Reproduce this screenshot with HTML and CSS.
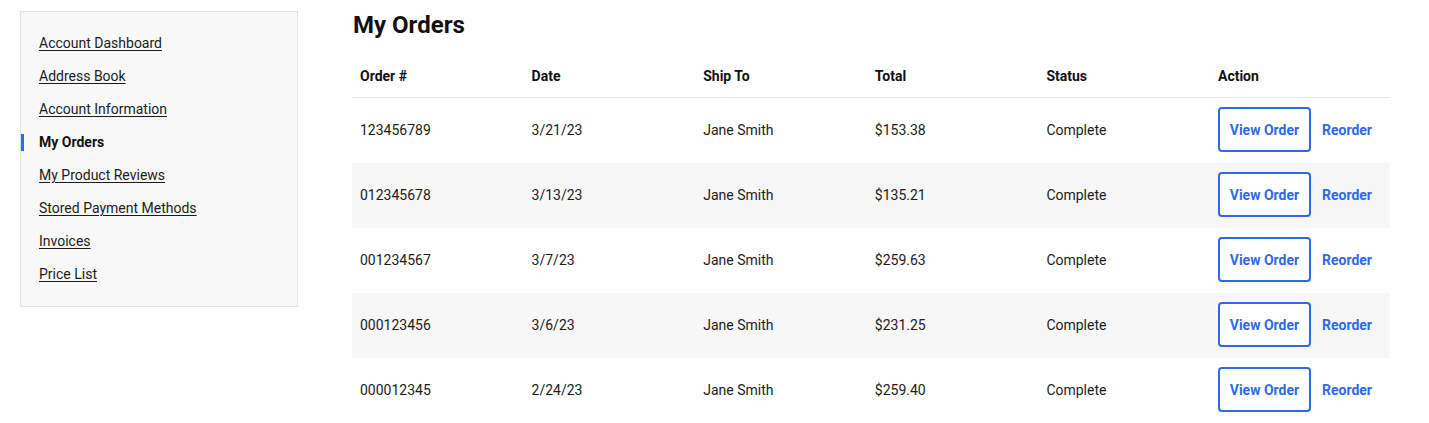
FILE: index.html
```html
<!DOCTYPE html>
<html>
<head>
<meta charset="utf-8">
<link rel="stylesheet" href="styles.css">
</head>
<body>
<div class="page">
  <aside class="sidebar">
    <nav class="nav">
      <a class="nav-link" href="#">Account Dashboard</a>
      <a class="nav-link" href="#">Address Book</a>
      <a class="nav-link" href="#">Account Information</a>
      <span class="nav-link active">My Orders</span>
      <a class="nav-link" href="#">My Product Reviews</a>
      <a class="nav-link" href="#">Stored Payment Methods</a>
      <a class="nav-link" href="#">Invoices</a>
      <a class="nav-link" href="#">Price List</a>
    </nav>
  </aside>
  <main class="main">
    <h1 class="title">My Orders</h1>
    <div class="table">
      <div class="row head">
        <div class="cell">Order #</div>
        <div class="cell">Date</div>
        <div class="cell">Ship To</div>
        <div class="cell">Total</div>
        <div class="cell">Status</div>
        <div class="cell">Action</div>
      </div>
      <div class="row">
        <div class="cell">123456789</div>
        <div class="cell">3/21/23</div>
        <div class="cell">Jane Smith</div>
        <div class="cell">$153.38</div>
        <div class="cell">Complete</div>
        <div class="cell actions"><a class="btn" href="#">View Order</a><a class="reorder" href="#">Reorder</a></div>
      </div>
      <div class="row alt">
        <div class="cell">012345678</div>
        <div class="cell">3/13/23</div>
        <div class="cell">Jane Smith</div>
        <div class="cell">$135.21</div>
        <div class="cell">Complete</div>
        <div class="cell actions"><a class="btn" href="#">View Order</a><a class="reorder" href="#">Reorder</a></div>
      </div>
      <div class="row">
        <div class="cell">001234567</div>
        <div class="cell">3/7/23</div>
        <div class="cell">Jane Smith</div>
        <div class="cell">$259.63</div>
        <div class="cell">Complete</div>
        <div class="cell actions"><a class="btn" href="#">View Order</a><a class="reorder" href="#">Reorder</a></div>
      </div>
      <div class="row alt">
        <div class="cell">000123456</div>
        <div class="cell">3/6/23</div>
        <div class="cell">Jane Smith</div>
        <div class="cell">$231.25</div>
        <div class="cell">Complete</div>
        <div class="cell actions"><a class="btn" href="#">View Order</a><a class="reorder" href="#">Reorder</a></div>
      </div>
      <div class="row">
        <div class="cell">000012345</div>
        <div class="cell">2/24/23</div>
        <div class="cell">Jane Smith</div>
        <div class="cell">$259.40</div>
        <div class="cell">Complete</div>
        <div class="cell actions"><a class="btn" href="#">View Order</a><a class="reorder" href="#">Reorder</a></div>
      </div>
    </div>
  </main>
</div>
</body>
</html>
```

FILE: styles.css
```css
* { box-sizing: border-box; }
html, body { margin: 0; padding: 0; background: #fff; }
body {
  font-family: Roboto, "Liberation Sans", Arial, sans-serif;
  font-size: 14px;
  color: #1c1c1c;
}
.page {
  display: flex;
  align-items: flex-start;
  padding: 11px 0 0 20px;
  gap: 54px;
}
.sidebar {
  width: 278px;
  height: 296px;
  background: #f8f8f8;
  border: 1px solid #e3e3e3;
  flex: none;
}
.nav {
  display: flex;
  flex-direction: column;
  padding-top: 22px;
}
.nav-link {
  position: relative;
  display: block;
  height: 33px;
  line-height: 19px;
  padding-left: 18px;
  color: #1c1c1c;
  text-decoration: underline;
  text-underline-offset: 2px;
  font-size: 14px;
}
.nav-link.active {
  font-weight: 700;
  text-decoration: none;
  color: #111;
}
.nav-link.active::before {
  content: "";
  position: absolute;
  left: 0;
  top: 1px;
  width: 3px;
  height: 17px;
  background: #2f6ae5;
}
.main {
  width: 1038px;
  flex: none;
}
.title {
  margin: 0;
  font-size: 24px;
  font-weight: 700;
  line-height: 28px;
  color: #111;
  padding-left: 1px;
}
.table {
  margin-top: 17px;
}
.row {
  display: grid;
  grid-template-columns: repeat(5, 171.6px) 1fr;
  height: 65px;
  align-items: center;
  padding-bottom: 2px;
}
.row.head {
  height: 42px;
  font-weight: 700;
  border-bottom: 1px solid #e6e6e6;
  color: #111;
  padding-bottom: 1px;
}
.row.alt { background: #f7f7f7; }
.cell {
  padding-left: 8px;
}
.actions {
  display: flex;
  align-items: center;
  gap: 11px;
}
.btn {
  display: flex;
  align-items: center;
  justify-content: center;
  width: 93px;
  height: 45px;
  border: 2px solid #2f6ae5;
  border-radius: 4px;
  background: #fff;
  color: #2f6ae5;
  font-weight: 700;
  text-decoration: none;
}
.reorder {
  color: #2f6ae5;
  font-weight: 700;
  text-decoration: none;
}
```
